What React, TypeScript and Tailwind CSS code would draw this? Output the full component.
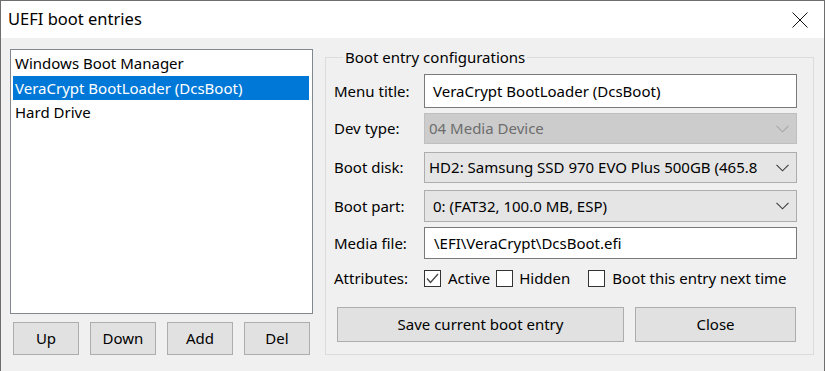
import React from "react";

const Chevron = ({ disabled }: { disabled?: boolean }) => (
  <svg width="13" height="8" viewBox="0 0 13 8" className="shrink-0">
    <polyline
      points="0.5,0.8 6.5,6.8 12.5,0.8"
      fill="none"
      stroke={disabled ? "#a8a8a8" : "#3c3c3c"}
      strokeWidth="1.1"
    />
  </svg>
);

const Check = ({ checked }: { checked?: boolean }) => (
  <div className="w-[17px] h-[17px] border border-[#333333] bg-white flex items-center justify-center shrink-0">
    {checked && (
      <svg width="13" height="11" viewBox="0 0 13 11">
        <polyline points="1,5.5 4.5,9.5 12,1" fill="none" stroke="#444" strokeWidth="1.3" />
      </svg>
    )}
  </div>
);

export default function App() {
  const items = ["Windows Boot Manager", "VeraCrypt BootLoader (DcsBoot)", "Hard Drive"];
  return (
    <div className="w-[825px] h-[371px] bg-[#f0f0f0] border-l border-r border-t border-[#6e6e6e] flex flex-col font-['Noto_Sans',sans-serif] text-[15px] text-black overflow-hidden">
      <div className="h-[37px] bg-white flex items-center justify-between pl-[7px] pr-[16px] shrink-0">
        <span className="text-[16.5px] leading-none">UEFI boot entries</span>
        <svg width="16" height="16" viewBox="0 0 16 16">
          <line x1="0.5" y1="0.5" x2="15.5" y2="15.5" stroke="#111" strokeWidth="1" />
          <line x1="15.5" y1="0.5" x2="0.5" y2="15.5" stroke="#111" strokeWidth="1" />
        </svg>
      </div>
      <div className="flex pt-[11px] pl-[9px]">
        <div className="w-[303px] flex flex-col shrink-0">
          <div className="h-[265px] border border-[#828790] bg-white pt-[1px] pl-[2px] pr-[3px]">
            {items.map((it, i) => (
              <div
                key={it}
                className={
                  "h-[24.5px] flex items-center pl-[2px] whitespace-nowrap " +
                  (i === 1 ? "bg-[#0078d7] text-white" : "")
                }
              >
                {it}
              </div>
            ))}
          </div>
          <div className="flex gap-[11px] pl-[3px] mt-[8px]">
            {["Up", "Down", "Add", "Del"].map((b) => (
              <div
                key={b}
                className="w-[66px] h-[33px] bg-[#e1e1e1] border border-[#adadad] flex items-center justify-center"
              >
                {b}
              </div>
            ))}
          </div>
        </div>
        <fieldset className="ml-[12px] mt-[-2px] w-[489px] min-w-0 h-[308px] border border-[#dcdcdc] pl-[8px] pr-[16px] pb-[10px]">
          <legend className="ml-[9px] px-[2px] leading-[20px]">Boot entry configurations</legend>
          <div className="flex flex-col mt-[7px]">
            <div className="flex items-center h-[34px]">
              <span className="w-[90px] shrink-0">Menu title:</span>
              <div className="flex-1 min-w-0 h-full border border-[#7a7a7a] bg-white flex items-center pl-[8px]">
                VeraCrypt BootLoader (DcsBoot)
              </div>
            </div>
            <div className="flex items-center h-[31px] mt-[5px]">
              <span className="w-[90px] shrink-0">Dev type:</span>
              <div className="flex-1 min-w-0 h-full border border-[#bfbfbf] bg-[#cccccc] text-[#6d6d6d] flex items-center pl-[4px] pr-[7px]">
                <span className="flex-1">04 Media Device</span>
                <Chevron disabled />
              </div>
            </div>
            <div className="flex items-center h-[31px] mt-[8px]">
              <span className="w-[90px] shrink-0">Boot disk:</span>
              <div className="flex-1 min-w-0 h-full border border-[#adadad] bg-[#e5e5e5] flex items-center pl-[4px] pr-[7px]">
                <span className="flex-1 min-w-0 whitespace-nowrap mr-[8px]">
                  HD2: Samsung SSD 970 EVO Plus 500GB (465.8
                </span>
                <Chevron />
              </div>
            </div>
            <div className="flex items-center h-[32px] mt-[7px]">
              <span className="w-[90px] shrink-0">Boot part:</span>
              <div className="flex-1 min-w-0 h-full border border-[#adadad] bg-[#e5e5e5] flex items-center pl-[8px] pr-[7px]">
                <span className="flex-1">0: (FAT32, 100.0 MB, ESP)</span>
                <Chevron />
              </div>
            </div>
            <div className="flex items-center h-[32px] mt-[5px]">
              <span className="w-[90px] shrink-0">Media file:</span>
              <div className="flex-1 min-w-0 h-full border border-[#7a7a7a] bg-white flex items-center pl-[9px]">
                \EFI\VeraCrypt\DcsBoot.efi
              </div>
            </div>
            <div className="flex items-center h-[22px] mt-[8px]">
              <span className="w-[90px] shrink-0">Attributes:</span>
              <Check checked />
              <span className="ml-[7px]">Active</span>
              <div className="ml-[6px]">
                <Check />
              </div>
              <span className="ml-[6px]">Hidden</span>
              <div className="ml-[18px]">
                <Check />
              </div>
              <span className="ml-[7px]">Boot this entry next time</span>
            </div>
            <div className="flex mt-[18px] pl-[3px] gap-[11px]">
              <div className="w-[287px] h-[35px] bg-[#e1e1e1] border border-[#adadad] flex items-center justify-center">
                Save current boot entry
              </div>
              <div className="w-[161px] h-[35px] bg-[#e1e1e1] border border-[#adadad] flex items-center justify-center">
                Close
              </div>
            </div>
          </div>
        </fieldset>
      </div>
    </div>
  );
}
